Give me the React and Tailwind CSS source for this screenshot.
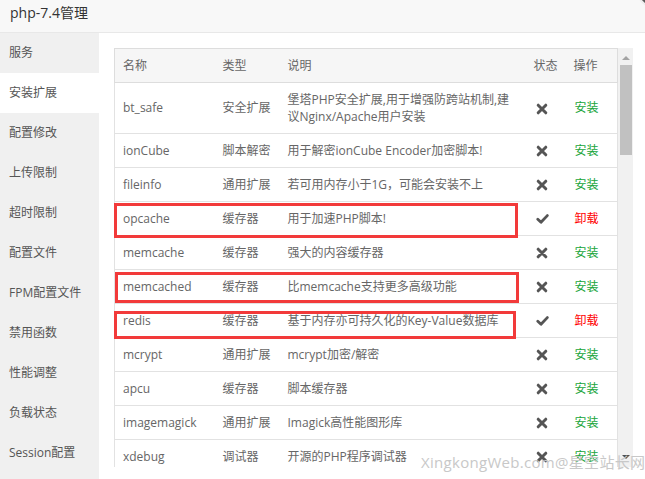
// PHP 管理弹窗：左侧菜单 + 扩展列表
const menu = ['服务', '安装扩展', '配置修改', '上传限制', '超时限制', '配置文件', 'FPM配置文件', '禁用函数', '性能调整', '负载状态', 'Session配置']

const rows = [
  ['bt_safe', '安全扩展', '堡塔PHP安全扩展,用于增强防跨站机制,建议Nginx/Apache用户安装', false],
  ['ionCube', '脚本解密', '用于解密ionCube Encoder加密脚本!', false],
  ['fileinfo', '通用扩展', '若可用内存小于1G，可能会安装不上', false],
  ['opcache', '缓存器', '用于加速PHP脚本!', true],
  ['memcache', '缓存器', '强大的内容缓存器', false],
  ['memcached', '缓存器', '比memcache支持更多高级功能', false],
  ['redis', '缓存器', '基于内存亦可持久化的Key-Value数据库', true],
  ['mcrypt', '通用扩展', 'mcrypt加密/解密', false],
  ['apcu', '缓存器', '脚本缓存器', false],
  ['imagemagick', '通用扩展', 'Imagick高性能图形库', false],
  ['xdebug', '调试器', '开源的PHP程序调试器', false],
]

function XIcon() {
  return (
    <svg width="12" height="12" viewBox="0 0 12 12" className="inline-block">
      <path d="M2.2 2.2 L9.8 9.8 M9.8 2.2 L2.2 9.8" stroke="#555" strokeWidth="3" strokeLinecap="round" fill="none" />
    </svg>
  )
}

function CheckIcon() {
  return (
    <svg width="13" height="12" viewBox="0 0 13 12" className="inline-block">
      <path d="M1.8 6.2 L5 9.3 L11.3 2.6" stroke="#555" strokeWidth="2.8" strokeLinecap="round" strokeLinejoin="round" fill="none" />
    </svg>
  )
}

export default function App() {
  return (
    <div className="relative w-[645px] h-[479px] overflow-hidden bg-white flex flex-col text-[#666]" style={{ fontFamily: '"Open Sans", "Noto Sans CJK SC", sans-serif' }}>
      <div className="h-[33px] shrink-0 bg-[#f8f8f8] border-b border-[#e8e8e8] pl-[10px] pt-[3px] leading-[20px] text-[14px] text-[#333]">
        php-7.4管理
      </div>
      <div className="absolute -top-[26px] -right-[26px] w-[34px] h-[34px] rounded-full bg-[#5a5a5a] border-2 border-[#eee]" />

      <div className="flex flex-1 min-h-0">
        <div className="w-[99px] shrink-0 bg-[#f0f0f0] flex flex-col">
          {menu.map((m, i) => (
            <div key={m} className={`h-10 flex items-center pl-[9px] text-[12px] text-[#555] ${i === 1 ? 'bg-white' : ''}`}>
              {m}
            </div>
          ))}
        </div>

        <div className="flex-1 pl-[15px] pt-[15px]">
          <div className="relative flex w-[519px] h-[419px] overflow-hidden">
            <table className="table-fixed border-collapse w-[503px] text-[12px] self-start">
              <colgroup>
                <col className="w-[100px]" />
                <col className="w-[65px]" />
                <col className="w-[246px]" />
                <col className="w-[40px]" />
                <col className="w-[52px]" />
              </colgroup>
              <thead>
                <tr className="h-[34px] bg-[#f6f6f6] border border-[#ddd]">
                  <th className="text-left font-normal pl-[8px]">名称</th>
                  <th className="text-left font-normal pl-[8px]">类型</th>
                  <th className="text-left font-normal pl-[8px]">说明</th>
                  <th className="text-left font-normal pl-[8px]">状态</th>
                  <th className="text-left font-normal pl-[8px]">操作</th>
                </tr>
              </thead>
              <tbody>
                {rows.map(([name, type, desc, on]) => (
                  <tr key={name} className={`border border-[#e2e2e2] ${name === 'bt_safe' ? 'h-[51px]' : 'h-[34px]'}`}>
                    <td className="pl-[8px]">{name}</td>
                    <td className="pl-[8px]">{type}</td>
                    <td className="pl-[8px] pr-[12px] leading-[17px]">{desc}</td>
                    <td className="pl-[10px]">{on ? <CheckIcon /> : <XIcon />}</td>
                    <td className="pl-[9px]">
                      {on ? <span className="text-[#f00]">卸载</span> : <span className="text-[#20a53a]">安装</span>}
                    </td>
                  </tr>
                ))}
              </tbody>
            </table>

            {/* 红框标注 */}
            <div className="absolute left-0 top-[155px] w-[404px] h-[35px] border-[3px] border-[#f23a3a]" />
            <div className="absolute left-[1px] top-[224px] w-[404px] h-[31px] border-[3px] border-[#f23a3a]" />
            <div className="absolute left-0 top-[263px] w-[402px] h-[28px] border-[3px] border-[#f23a3a]" />

            {/* 滚动条 */}
            <div className="w-[16px] h-full bg-[#f1f1f1] flex flex-col items-center">
              <div className="h-[17px] flex items-center pt-[2px]">
                <div className="w-0 h-0 border-l-[4px] border-r-[4px] border-b-[4px] border-l-transparent border-r-transparent border-b-[#a3a3a3]" />
              </div>
              <div className="w-[12px] h-[90px] bg-[#c1c1c1]" />
              <div className="flex-1" />
              <div className="h-[17px] flex items-center pb-[4px]">
                <div className="w-0 h-0 border-l-[4px] border-r-[4px] border-t-[4px] border-l-transparent border-r-transparent border-t-[#505050]" />
              </div>
            </div>
          </div>
        </div>
      </div>

      <div className="absolute left-[421px] top-[451px] text-[15px] tracking-[0.3px] text-[#c8c8c8] whitespace-nowrap">
        XingkongWeb.com@星空站长网
      </div>
    </div>
  )
}
